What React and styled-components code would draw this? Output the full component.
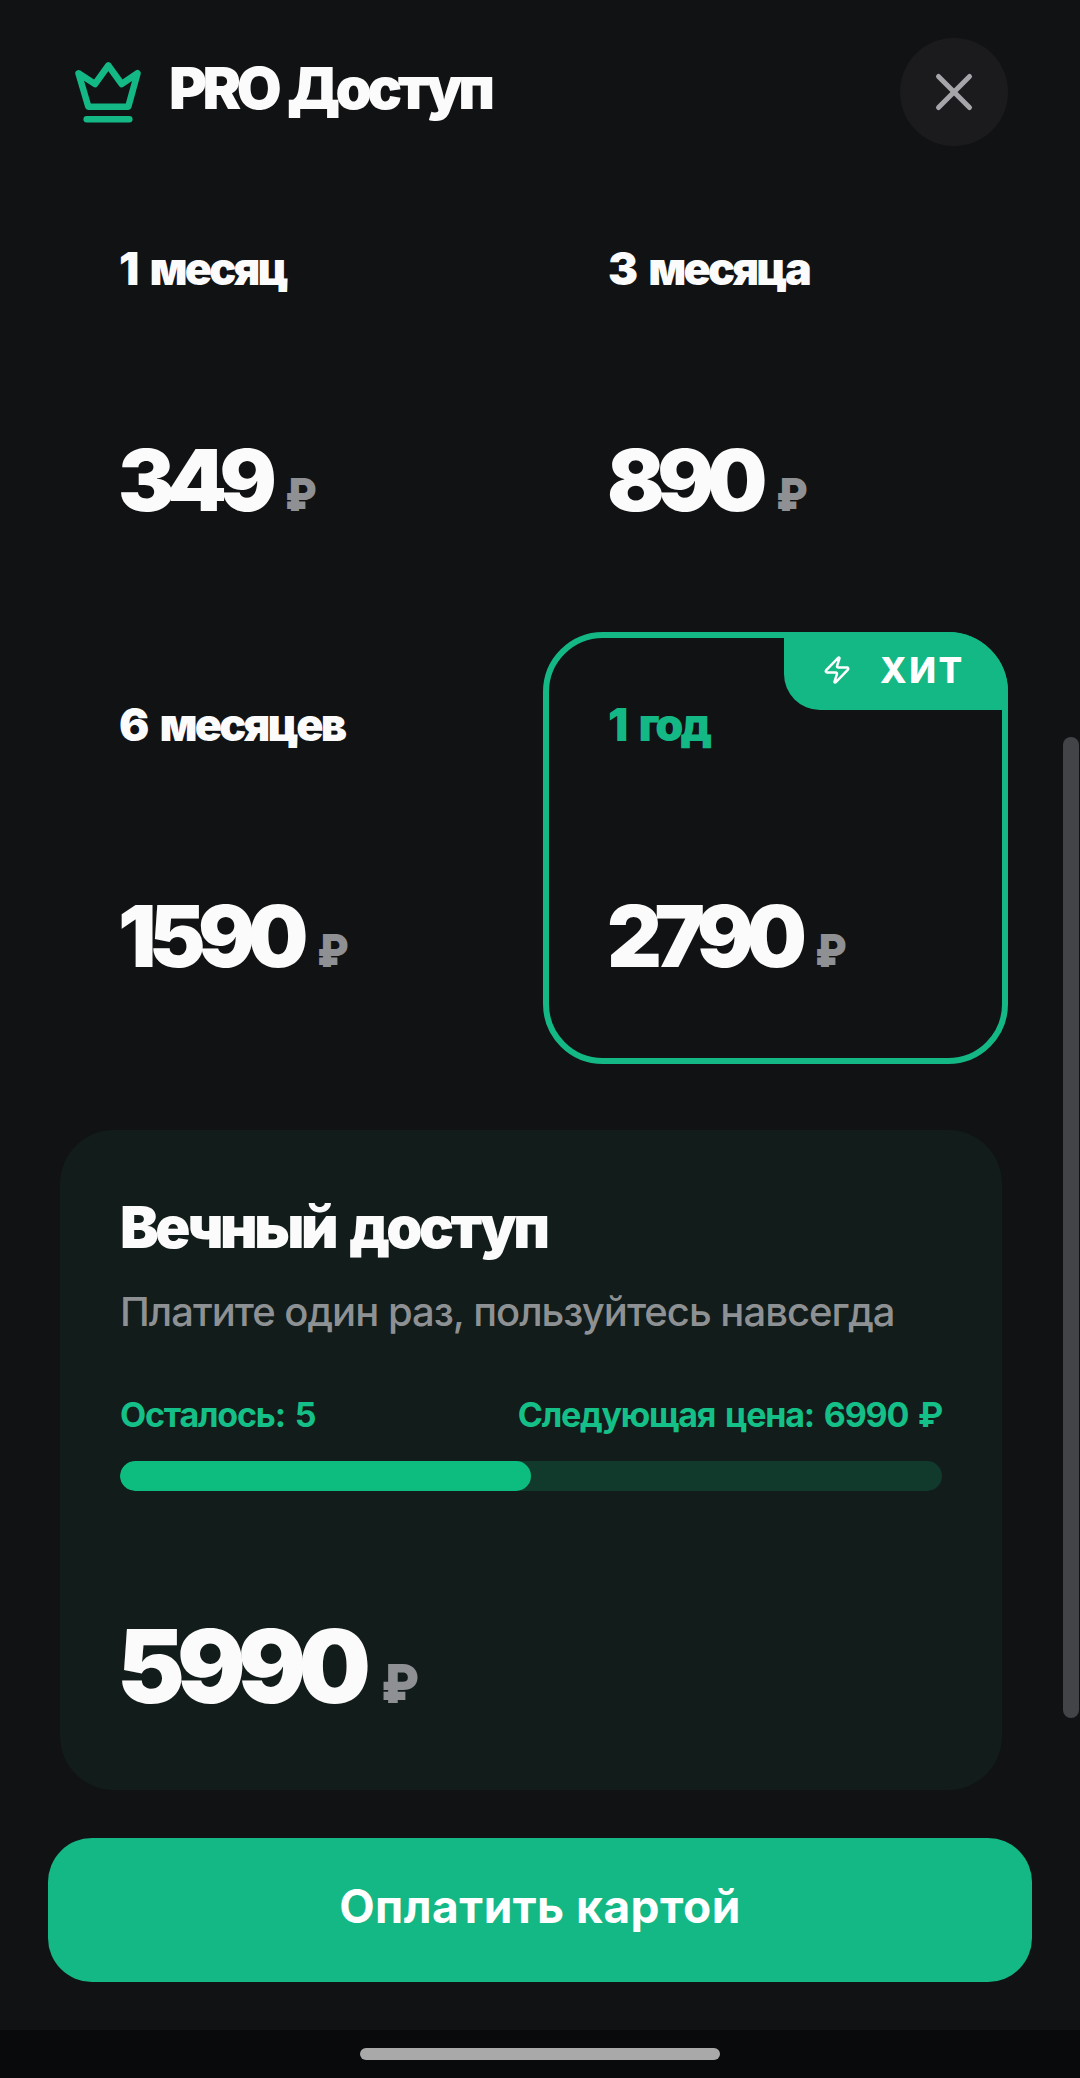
import React from "react";
import styled, { createGlobalStyle } from "styled-components";
import { Zap, X } from "lucide-react";

const GREEN = "#14b885";
const FONT = `"Inter", "Noto Sans", sans-serif`;

const GlobalStyle = createGlobalStyle`
  html, body {
    margin: 0;
    padding: 0;
    background: #111214;
  }
  * {
    box-sizing: border-box;
  }
`;

const Page = styled.div`
  position: relative;
  display: flex;
  flex-direction: column;
  width: 1080px;
  height: 2078px;
  overflow: hidden;
  background: #111214;
  font-family: ${FONT};
  color: #fbfbfb;
`;

const Content = styled.div`
  flex: 1;
  min-height: 0;
`;

const Header = styled.header`
  display: flex;
  align-items: center;
  justify-content: space-between;
  padding: 38px 72px 0 75px;
`;

const TitleGroup = styled.div`
  display: flex;
  align-items: center;
  gap: 28px;
`;

const Title = styled.h1`
  margin: 0 0 8px;
  font-size: 58px;
  line-height: 1;
  font-weight: 900;
  letter-spacing: -4.5px;
  word-spacing: 3px;
`;

const CloseButton = styled.button`
  display: flex;
  align-items: center;
  justify-content: center;
  width: 108px;
  height: 108px;
  padding: 0;
  border: none;
  border-radius: 50%;
  background: #1b1b1e;
  color: #a5a5aa;
`;

const PlanGrid = styled.div`
  display: grid;
  grid-template-columns: 465px 465px;
  grid-auto-rows: 432px;
  gap: 24px;
  margin: 30px 0 66px 54px;
`;

const PlanCard = styled.div`
  position: relative;
  display: flex;
  flex-direction: column;
  padding: 64px 60px 0 59px;
  border: 6px solid ${(p) => (p.$active ? GREEN : "transparent")};
  border-radius: 60px;
`;

const PlanLabel = styled.div`
  font-size: 45px;
  line-height: 46px;
  font-weight: 900;
  letter-spacing: -2.9px;
  word-spacing: 7px;
  color: ${(p) => (p.$active ? GREEN : "#fbfbfb")};
`;

const PriceRow = styled.div`
  display: flex;
  align-items: baseline;
  gap: ${(p) => (p.$large ? 18 : 16)}px;
  margin-top: ${(p) => p.$top}px;
  margin-left: ${(p) => (p.$large ? -3 : -1)}px;
`;

const PriceValue = styled.span`
  font-size: ${(p) => (p.$large ? 102 : 85)}px;
  line-height: 1;
  font-weight: 900;
  letter-spacing: ${(p) => (p.$large ? -8 : -7.5)}px;
`;

const Currency = styled.span`
  display: inline-block;
  font-size: ${(p) => (p.$large ? 54 : 45)}px;
  line-height: 1;
  font-weight: 900;
  color: #8e9094;
  transform: scaleX(0.9);
  transform-origin: left;
`;

const HitBadge = styled.div`
  position: absolute;
  top: -6px;
  right: -6px;
  display: flex;
  align-items: center;
  gap: 28px;
  width: 224px;
  height: 78px;
  padding: 0 0 2px 38px;
  border-radius: 0 60px 0 36px;
  background: ${GREEN};
  color: #fff;
  font-size: 35px;
  font-weight: 800;
  letter-spacing: 2.5px;
`;

const EternalCard = styled.section`
  display: flex;
  flex-direction: column;
  width: 942px;
  height: 660px;
  margin-left: 60px;
  padding: 68px 60px 0;
  border-radius: 54px;
  background: #121c1a;
`;

const EternalTitle = styled.h2`
  margin: 0;
  font-size: 58px;
  line-height: 1;
  font-weight: 900;
  letter-spacing: -3.5px;
  word-spacing: 6px;
`;

const EternalText = styled.p`
  margin: 36px 0 0;
  font-size: 40px;
  line-height: 1;
  font-weight: 500;
  letter-spacing: -1px;
  color: #8e9194;
`;

const StockRow = styled.div`
  display: flex;
  justify-content: space-between;
  margin-top: 66px;
  font-size: 34px;
  line-height: 1;
  font-weight: 700;
  letter-spacing: -1.2px;
  word-spacing: 3px;
  color: #15c088;
`;

const Track = styled.div`
  height: 30px;
  margin-top: 29px;
  border-radius: 15px;
  background: #113a2d;
  overflow: hidden;
`;

const Fill = styled.div`
  height: 100%;
  border-radius: 15px;
  background: #0dbd80;
`;

const Footer = styled.div`
  padding: 48px;
`;

const PayButton = styled.button`
  display: block;
  width: 100%;
  height: 144px;
  padding: 0 0 8px;
  border: none;
  border-radius: 44px;
  background: ${GREEN};
  color: #fff;
  font-family: ${FONT};
  font-size: 46px;
  font-weight: 700;
  letter-spacing: 0.5px;
`;

const NavBar = styled.div`
  display: flex;
  justify-content: center;
  height: 48px;
  padding-top: 18px;
  background: #090a0c;
`;

const HomePill = styled.div`
  width: 360px;
  height: 12px;
  border-radius: 6px;
  background: #a9a9a9;
`;

const Scrollbar = styled.div`
  position: absolute;
  top: 737px;
  right: 1px;
  width: 16px;
  height: 981px;
  border-radius: 8px;
  background: #434448;
`;

const CrownIcon = () => (
  <svg width="66" height="61" viewBox="0 0 66 61" fill="none" stroke={GREEN} strokeWidth="6.5" strokeLinecap="round" strokeLinejoin="round">
    <path d="M3.5 11.3 20 22 33.3 3.5 46.7 22 62.5 11.3 53.3 44.7H13.3Z" />
    <path d="M11.7 57.3H54.3" />
  </svg>
);

const plans = [
  { label: "1 месяц", price: "349" },
  { label: "3 месяца", price: "890" },
  { label: "6 месяцев", price: "1590" },
  { label: "1 год", price: "2790", active: true },
];

export default function App() {
  return (
    <Page>
      <GlobalStyle />
      <Content>
        <Header>
          <TitleGroup>
            <CrownIcon />
            <Title>PRO Доступ</Title>
          </TitleGroup>
          <CloseButton aria-label="Закрыть">
            <X size={62} strokeWidth={1.95} />
          </CloseButton>
        </Header>

        <PlanGrid>
          {plans.map((plan) => (
            <PlanCard key={plan.label} $active={plan.active}>
              {plan.active && (
                <HitBadge>
                  <Zap size={30} strokeWidth={2} />
                  ХИТ
                </HitBadge>
              )}
              <PlanLabel $active={plan.active}>{plan.label}</PlanLabel>
              <PriceRow $top={146}>
                <PriceValue>{plan.price}</PriceValue>
                <Currency>₽</Currency>
              </PriceRow>
            </PlanCard>
          ))}
        </PlanGrid>

        <EternalCard>
          <EternalTitle>Вечный доступ</EternalTitle>
          <EternalText>Платите один раз, пользуйтесь навсегда</EternalText>
          <StockRow>
            <span>Осталось: 5</span>
            <span>Следующая цена: 6990 ₽</span>
          </StockRow>
          <Track>
            <Fill style={{ width: "50%" }} />
          </Track>
          <PriceRow $large $top={124}>
            <PriceValue $large>5990</PriceValue>
            <Currency $large>₽</Currency>
          </PriceRow>
        </EternalCard>
      </Content>

      <Footer>
        <PayButton>Оплатить картой</PayButton>
      </Footer>
      <NavBar>
        <HomePill />
      </NavBar>
      <Scrollbar />
    </Page>
  );
}
